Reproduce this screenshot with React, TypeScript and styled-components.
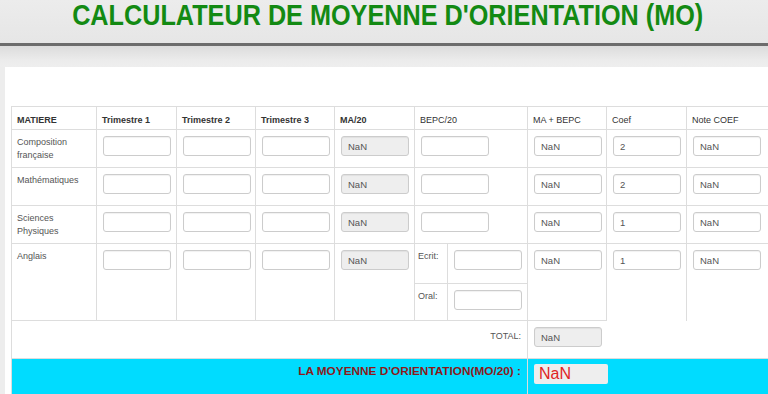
import React, { FC } from "react";
import styled, { createGlobalStyle } from "styled-components";

const GlobalStyle = createGlobalStyle`
    html, body {
        margin: 0;
        padding: 0;
        background: #ededed;
        overflow: hidden;
        font-family: "Liberation Sans", Arial, sans-serif;
    }
`

const Header = styled.header`
    height: 43px;
    background: linear-gradient(#ececec, #e6e6e6);
    border-bottom: 3px solid #6c6c6c;
    display: flex;
    justify-content: center;
    align-items: flex-start;
`

const Title = styled.h1`
    margin: 0 0 0 8px;
    padding-top: 1px;
    font-size: 29px;
    line-height: 28px;
    font-weight: bold;
    color: #138a13;
    white-space: nowrap;
    transform: scaleX(0.87);
    transform-origin: center top;
`

const Shade = styled.div`
    height: 21px;
    background: linear-gradient(#dcdcdc, #ececec 70%, #eeeeee);
`

const Panel = styled.main`
    margin-left: 5px;
    background: #ffffff;
    padding: 39px 0 0 6px;
    height: 400px;
    overflow: hidden;
`

const Table = styled.table`
    border-collapse: collapse;
    table-layout: fixed;
    width: 762px;
    font-size: 9px;
    color: #555;
`

const Cell = styled.td<{ $right?: boolean; $cyan?: boolean; $open?: boolean }>`
    border-top: 1px solid #dddddd;
    border-left: 1px solid #dddddd;
    border-right: ${(p) => (p.$open ? "hidden" : "1px solid #dddddd")};
    padding: 5px 5px 0 5px;
    vertical-align: top;
    line-height: 13px;
    text-align: ${(p) => (p.$right ? "right" : "left")};
    background: ${(p) => (p.$cyan ? "#00dcff" : "transparent")};
`

const Head = styled.th<{ $light?: boolean }>`
    border-top: 1px solid #dddddd;
    border-left: 1px solid #dddddd;
    border-right: 1px solid #dddddd;
    padding: 6px 5px 3px 5px;
    text-align: left;
    font-weight: ${(p) => (p.$light ? "normal" : "bold")};
    color: #333;
    height: 13px;
`

const Subject = styled.div`
    padding-top: 1px;
`

const Field = styled.input<{ $muted?: boolean; $gap?: number }>`
    display: block;
    box-sizing: border-box;
    width: 68px;
    height: 20px;
    margin: 1px 0 ${(p) => p.$gap ?? 11}px 1px;
    padding: 0 6px;
    border: 1px solid #cccccc;
    border-radius: 3px;
    background: ${(p) => (p.$muted ? "#eeeeee" : "#ffffff")};
    font-family: "Liberation Sans", Arial, sans-serif;
    font-size: 9.5px;
    color: #555;
    box-shadow: inset 0 1px 1px rgba(0, 0, 0, 0.06);
    outline: none;
`

const ResultField = styled.input`
    display: block;
    box-sizing: border-box;
    width: 74px;
    height: 20px;
    margin: 0 0 12px 1px;
    padding: 0 5px;
    border: none;
    border-radius: 2px;
    background: #eeeeee;
    font-family: "Liberation Sans", Arial, sans-serif;
    font-size: 16px;
    color: #e02424;
    outline: none;
`

const SideLabel = styled.div`
    padding-top: 1px;
    color: #555;
`

const Result = styled.div`
    padding-top: 1px;
    padding-right: 1px;
    font-weight: bold;
    font-size: 11.8px;
    color: #8b1a1a;
`

const Total = styled.div`
    padding-top: 4px;
    padding-right: 1px;
`

type Row = { name: string; coef: string };

const rows: Row[] = [
    { name: "Composition française", coef: "2" },
    { name: "Mathématiques", coef: "2" },
    { name: "Sciences Physiques", coef: "1" },
];

const Trimesters: FC = () => (
    <>
        <Cell><Field /></Cell>
        <Cell><Field /></Cell>
        <Cell><Field /></Cell>
        <Cell><Field $muted readOnly value="NaN" /></Cell>
    </>
)

export default function App() {
    return (
        <>
            <GlobalStyle />
            <Header>
                <Title>CALCULATEUR DE MOYENNE D'ORIENTATION (MO)</Title>
            </Header>
            <Shade />
            <Panel>
                <Table>
                    <colgroup>
                        <col style={{ width: 85 }} />
                        <col style={{ width: 80 }} />
                        <col style={{ width: 79 }} />
                        <col style={{ width: 79 }} />
                        <col style={{ width: 80 }} />
                        <col style={{ width: 33 }} />
                        <col style={{ width: 80 }} />
                        <col style={{ width: 79 }} />
                        <col style={{ width: 80 }} />
                        <col style={{ width: 87 }} />
                    </colgroup>
                    <thead>
                        <tr>
                            <Head>MATIERE</Head>
                            <Head>Trimestre 1</Head>
                            <Head>Trimestre 2</Head>
                            <Head>Trimestre 3</Head>
                            <Head>MA/20</Head>
                            <Head colSpan={2} $light>BEPC/20</Head>
                            <Head $light>MA + BEPC</Head>
                            <Head $light>Coef</Head>
                            <Head $light>Note COEF</Head>
                        </tr>
                    </thead>
                    <tbody>
                        {rows.map((r) => (
                            <tr key={r.name}>
                                <Cell><Subject>{r.name}</Subject></Cell>
                                <Trimesters />
                                <Cell colSpan={2}><Field /></Cell>
                                <Cell><Field readOnly value="NaN" /></Cell>
                                <Cell><Field readOnly value={r.coef} /></Cell>
                                <Cell><Field readOnly value="NaN" /></Cell>
                            </tr>
                        ))}
                        <tr>
                            <Cell rowSpan={2}><Subject>Anglais</Subject></Cell>
                            <Cell rowSpan={2}><Field /></Cell>
                            <Cell rowSpan={2}><Field /></Cell>
                            <Cell rowSpan={2}><Field /></Cell>
                            <Cell rowSpan={2}><Field $muted readOnly value="NaN" /></Cell>
                            <Cell style={{ paddingLeft: 3 }}><SideLabel>Ecrit:</SideLabel></Cell>
                            <Cell><Field $gap={13} /></Cell>
                            <Cell rowSpan={2}><Field readOnly value="NaN" /></Cell>
                            <Cell rowSpan={2}><Field readOnly value="1" /></Cell>
                            <Cell rowSpan={2}><Field readOnly value="NaN" /></Cell>
                        </tr>
                        <tr>
                            <Cell style={{ paddingLeft: 3 }}><SideLabel>Oral:</SideLabel></Cell>
                            <Cell><Field $gap={10} /></Cell>
                        </tr>
                        <tr>
                            <Cell colSpan={7} $right><Total>TOTAL:</Total></Cell>
                            <Cell $open><Field $muted readOnly value="NaN" /></Cell>
                        </tr>
                        <tr>
                            <Cell colSpan={7} $right $cyan><Result>LA MOYENNE D'ORIENTATION(MO/20) :</Result></Cell>
                            <Cell colSpan={3} $cyan><ResultField readOnly value="NaN" /></Cell>
                        </tr>
                    </tbody>
                </Table>
            </Panel>
        </>
    )
}
